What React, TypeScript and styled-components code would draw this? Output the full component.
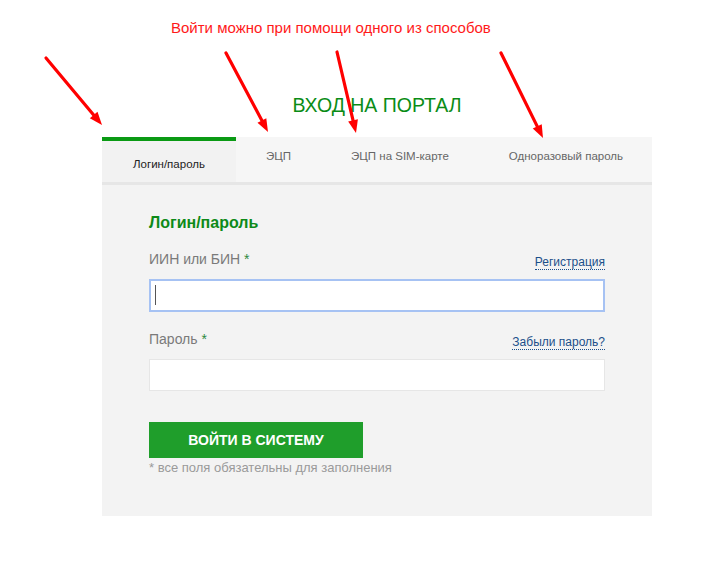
import styled, { createGlobalStyle } from 'styled-components'

const GlobalStyle = createGlobalStyle`
  body {
    margin: 0;
    background: #ffffff;
    font-family: 'Liberation Sans', Arial, sans-serif;
  }
`

const Page = styled.div`
  position: relative;
  width: 704px;
  height: 570px;
  overflow: hidden;
`

const Hint = styled.p`
  margin: 0;
  padding-top: 18px;
  padding-left: 171px;
  font-size: 15px;
  line-height: 19px;
  color: #ff1a1a;
`

const Portal = styled.section`
  width: 550px;
  margin: 56px 0 0 102px;
`

const Title = styled.h1`
  margin: 0 0 20px;
  text-align: center;
  font-size: 19.5px;
  line-height: 24px;
  font-weight: normal;
  color: #0a8c16;
`

const Tabs = styled.div`
  display: flex;
  height: 45px;
  background: #f6f6f6;
  border-bottom: 3px solid #e6e6e6;
`

const Tab = styled.div<{ active?: boolean }>`
  display: flex;
  flex-shrink: 0;
  align-items: center;
  justify-content: center;
  white-space: nowrap;
  padding: ${(p) => (p.active ? '4px 30px 0' : '0 30px 8px')};
  font-size: 11.5px;
  color: ${(p) => (p.active ? '#222' : '#666')};
  background: ${(p) => (p.active ? '#f2f2f2' : 'transparent')};
  border-top: ${(p) => (p.active ? '4px solid #0a9a14' : 'none')};
  width: ${(p) => (p.active ? '134px' : 'auto')};
  box-sizing: border-box;
`

const Body = styled.div`
  background: #f3f3f3;
  height: 331px;
  box-sizing: border-box;
  padding: 28px 47px 0;
`

const Heading = styled.h2`
  margin: 0 0 17px;
  font-size: 16px;
  line-height: 20px;
  font-weight: bold;
  color: #0d8a18;
`

const LabelRow = styled.div`
  display: flex;
  justify-content: space-between;
  align-items: flex-end;
  height: 20px;
  margin-bottom: 9px;
`

const Label = styled.label`
  font-size: 14px;
  line-height: 18px;
  color: #7a7a7a;
  align-self: flex-start;
`

const Star = styled.span`
  color: #2d8a3e;
`

const Link = styled.a`
  font-size: 12px;
  line-height: 14px;
  color: #1b4f8a;
  text-decoration: none;
  border-bottom: 1px dotted #1b4f8a;
`

const Input = styled.input<{ focused?: boolean }>`
  display: block;
  width: 456px;
  height: ${(p) => (p.focused ? '33px' : '32px')};
  box-sizing: border-box;
  margin: 0;
  padding: 0 6px;
  background: #fff;
  outline: none;
  border: ${(p) => (p.focused ? '2px solid #a6c2f3' : '1px solid #e6e6e6')};
  font-size: 14px;
`

const Caret = styled.span`
  position: absolute;
  left: 6px;
  top: 6px;
  width: 1px;
  height: 20px;
  background: #555;
`

const Field = styled.div`
  position: relative;
  margin-bottom: 18px;
`

const Submit = styled.button`
  display: block;
  width: 214px;
  height: 36px;
  margin-top: 31px;
  border: none;
  background: #1f9e2b;
  color: #fff;
  font-family: 'Liberation Sans', Arial, sans-serif;
  font-size: 14px;
  font-weight: bold;
  text-transform: uppercase;
`

const Note = styled.p`
  margin: 3px 0 0;
  font-size: 13px;
  line-height: 14px;
  color: #9a9a9a;
`

const Arrows = styled.svg`
  position: absolute;
  left: 0;
  top: 0;
  pointer-events: none;
`

const arrows = [
  [46, 58, 102, 125],
  [226, 53, 268, 132],
  [337, 52, 356, 133],
  [501, 53, 543, 138],
]

function Arrow({ x1, y1, x2, y2 }: { x1: number; y1: number; x2: number; y2: number }) {
  const a = Math.atan2(y2 - y1, x2 - x1)
  const len = 13
  const w = 5
  const bx = x2 - Math.cos(a) * len
  const by = y2 - Math.sin(a) * len
  const px = -Math.sin(a) * w
  const py = Math.cos(a) * w
  return (
    <g>
      <line x1={x1} y1={y1} x2={bx} y2={by} stroke="#ff0000" strokeWidth={3.2} strokeLinecap="round" />
      <polygon points={`${x2},${y2} ${bx + px},${by + py} ${bx - px},${by - py}`} fill="#ff0000" />
    </g>
  )
}

export default function App() {
  return (
    <Page>
      <GlobalStyle />
      <Hint>Войти можно при помощи одного из способов</Hint>
      <Portal>
        <Title>ВХОД НА ПОРТАЛ</Title>
        <Tabs>
          <Tab active>Логин/пароль</Tab>
          <Tab>ЭЦП</Tab>
          <Tab>ЭЦП на SIM-карте</Tab>
          <Tab>Одноразовый пароль</Tab>
        </Tabs>
        <Body>
          <Heading>Логин/пароль</Heading>
          <LabelRow>
            <Label>
              ИИН или БИН <Star>*</Star>
            </Label>
            <Link href="#">Регистрация</Link>
          </LabelRow>
          <Field>
            <Input focused />
            <Caret />
          </Field>
          <LabelRow>
            <Label>
              Пароль <Star>*</Star>
            </Label>
            <Link href="#">Забыли пароль?</Link>
          </LabelRow>
          <Field>
            <Input type="password" />
          </Field>
          <Submit>Войти в систему</Submit>
          <Note>* все поля обязательны для заполнения</Note>
        </Body>
      </Portal>
      <Arrows width={704} height={570}>
        {arrows.map(([x1, y1, x2, y2], i) => (
          <Arrow key={i} x1={x1} y1={y1} x2={x2} y2={y2} />
        ))}
      </Arrows>
    </Page>
  )
}
